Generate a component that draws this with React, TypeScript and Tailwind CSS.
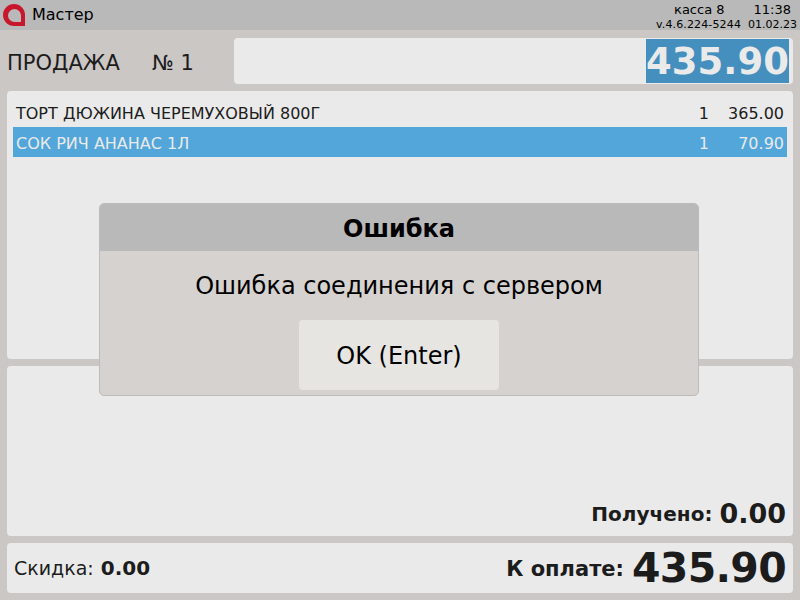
export default function App() {
  return (
    <div className="relative flex h-[600px] w-[800px] flex-col overflow-hidden bg-[#cbc7c4] text-[#1c1c1c]" style={{ fontFamily: '"DejaVu Sans", sans-serif' }}>
      <div className="flex h-[30px] items-center justify-between bg-[#b9b9b9] pl-[3px] pr-[9px]">
        <div className="flex items-center gap-[7px]">
          <svg width="22" height="22" viewBox="0 0 22 22">
            <path d="M22 22H11A11 11 0 1 1 22 11V22Z M18 18V11.5A6.5 6.5 0 1 0 11.5 18H18Z" fill="#c8162c" fillRule="evenodd" />
          </svg>
          <span className="text-[16px] leading-none text-black">Мастер</span>
        </div>
        <div className="flex flex-col items-end text-black">
          <div className="flex h-[17px] items-center text-[13px] leading-none">
            <span className="mr-[29px]">касса 8</span>
            <span>11:38</span>
          </div>
          <div className="mr-[-6px] flex h-[12px] items-center pt-[2px] text-[11px] leading-none">
            <span className="mr-[7px] tracking-[0.14px]">v.4.6.224-5244</span>
            <span>01.02.23</span>
          </div>
        </div>
      </div>

      <div className="mt-[8px] flex h-[46px] items-center pl-[7px] pr-[7px]">
        <span className="w-[145px] pt-[6px] text-[21px]">ПРОДАЖА</span>
        <span className="w-[82px] pt-[6px] text-[21px]">№ 1</span>
        <div className="flex h-[46px] flex-1 justify-end rounded-[4px] bg-[#eaeaea] py-px pr-[4px]">
          <div className="flex w-[143px] items-center justify-center bg-[#448fbd] text-[37px] font-bold leading-none text-[#eaeaea]">435.90</div>
        </div>
      </div>

      <div className="mx-[7px] mt-[7px] h-[268px] rounded-[4px] bg-[#eaeaea] px-[6px] pt-[7px] text-[16px]">
        <div className="flex h-[29px] items-center px-[3px] pt-[3px]">
          <span className="flex-1">ТОРТ ДЮЖИНА ЧЕРЕМУХОВЫЙ 800Г</span>
          <span className="mr-[19px]">1</span>
          <span className="w-[56px] text-right">365.00</span>
        </div>
        <div className="flex h-[30px] items-center bg-[#52a6da] px-[3px] pt-[3px] text-[#eaeaea]">
          <span className="flex-1">СОК РИЧ АНАНАС 1Л</span>
          <span className="mr-[19px]">1</span>
          <span className="w-[56px] text-right">70.90</span>
        </div>
      </div>

      <div className="mx-[7px] mt-[7px] flex h-[170px] items-end justify-end rounded-[4px] bg-[#eaeaea] pb-[7px] pr-[7px]">
        <span className="mr-[7px] text-[20px] font-bold leading-[30px]">Получено:</span>
        <span className="text-[27px] font-bold leading-[30px]">0.00</span>
      </div>

      <div className="mx-[7px] mt-[7px] flex h-[50px] items-center rounded-[4px] bg-[#eaeaea] pl-[7px] pr-[7px]">
        <span className="mr-[7px] text-[19px]">Скидка:</span>
        <span className="flex-1 text-[20px] font-bold">0.00</span>
        <span className="mr-[8px] pt-[3px] text-[21px] font-bold">К оплате:</span>
        <span className="text-[41px] font-bold leading-none tracking-[-0.7px]">435.90</span>
      </div>

      <div className="absolute left-[99px] top-[203px] flex h-[193px] w-[600px] flex-col overflow-hidden rounded-[5px] border border-[#bdbbb9] bg-[#d6d2cf] text-black">
        <div className="flex h-[47px] items-center justify-center bg-[#b9b9b9] pt-[3px] text-[24px] font-bold">Ошибка</div>
        <div className="flex h-[69px] items-center justify-center text-[24px]">Ошибка соединения с сервером</div>
        <div className="flex justify-center">
          <div className="flex h-[70px] w-[200px] items-center justify-center rounded-[4px] bg-[#e6e5e2] pt-[1px] text-[24px]">OK (Enter)</div>
        </div>
      </div>
    </div>
  );
}
